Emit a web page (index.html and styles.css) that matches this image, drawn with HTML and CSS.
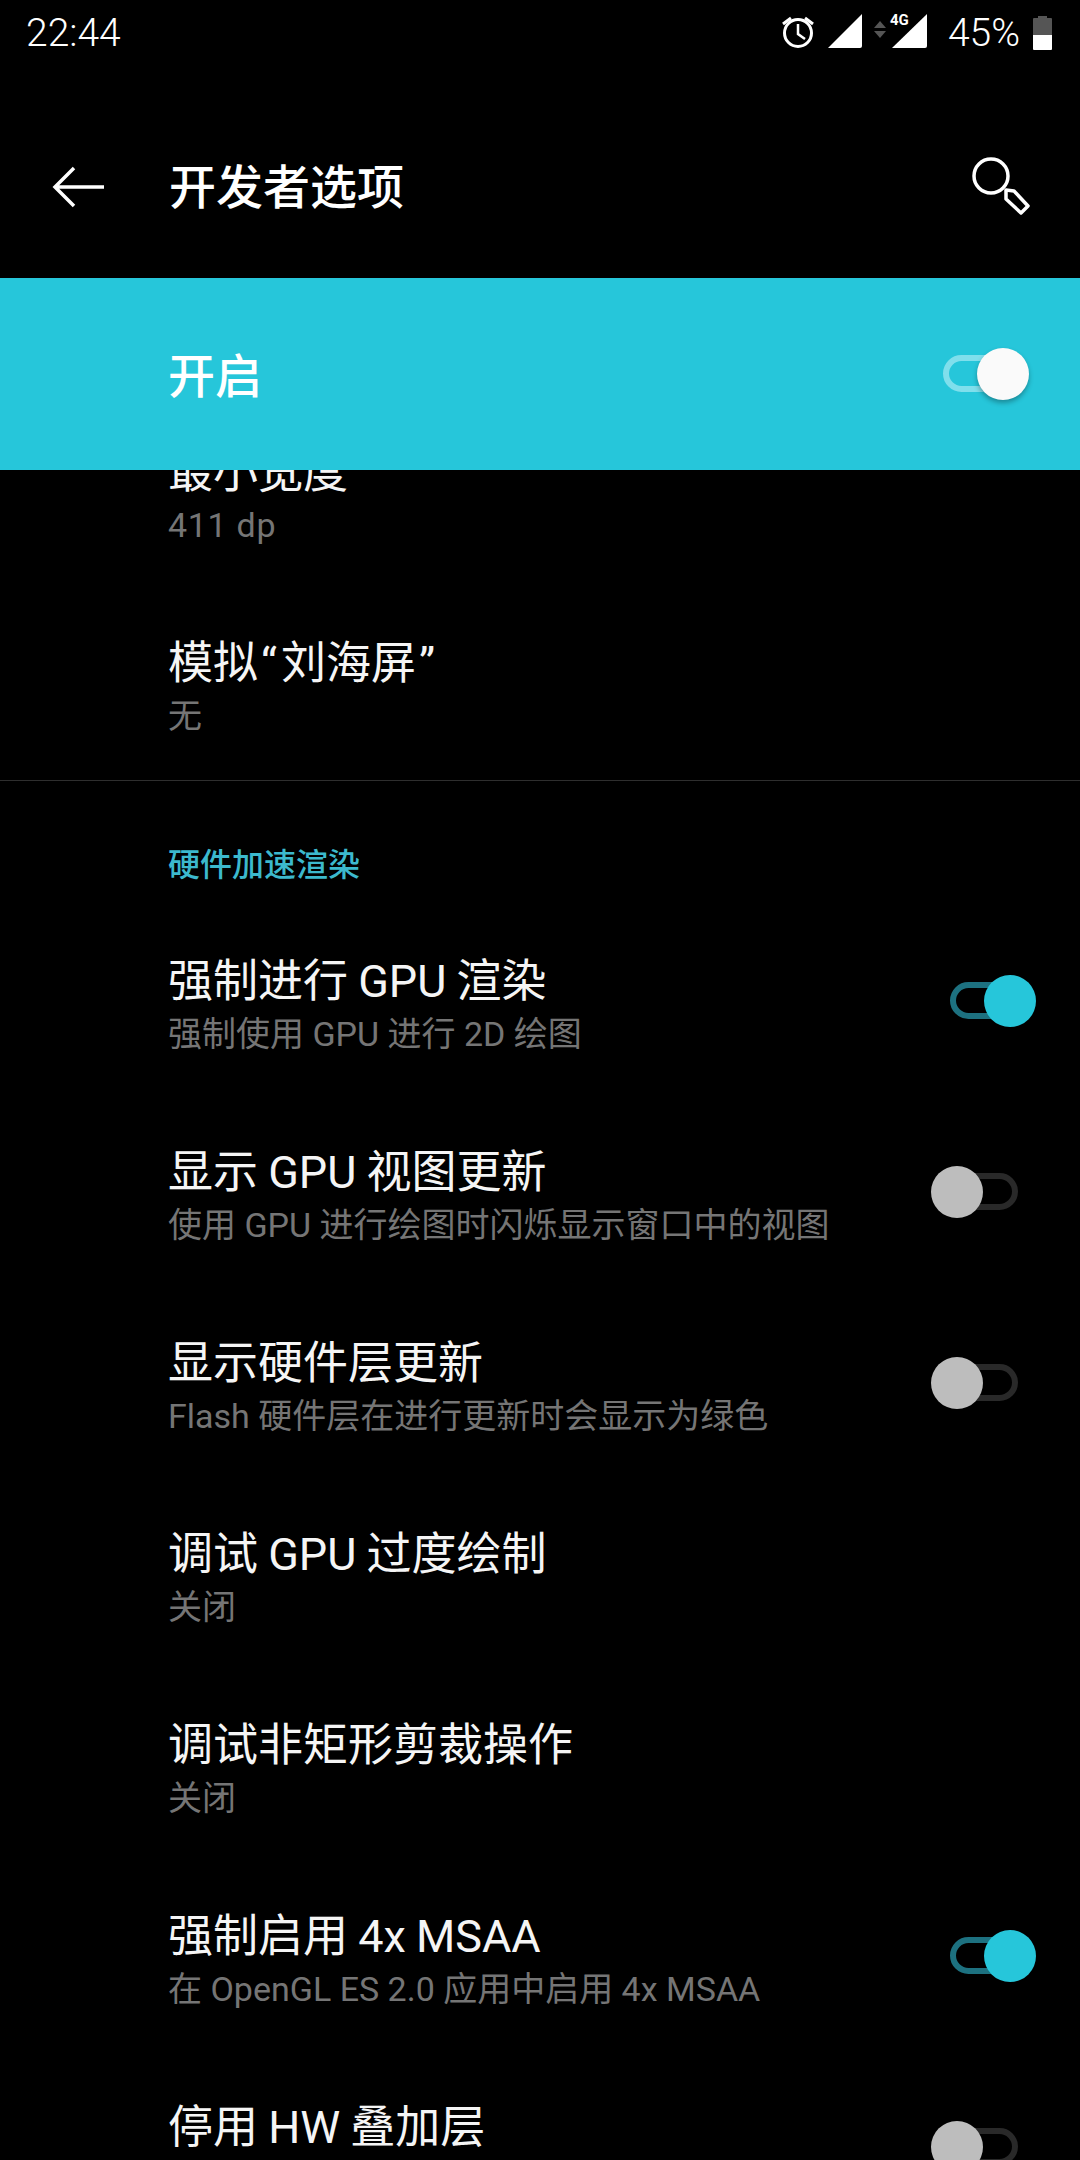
FILE: index.html
```html
<!DOCTYPE html>
<html lang="zh-CN">
<head>
    <meta charset="UTF-8">
    <meta name="viewport" content="width=device-width, initial-scale=1.0">
    <title>开发者选项</title>
    <link rel="stylesheet" href="styles.css">
</head>
<body>

    <div class="statusbar">
        <div class="time">22:44</div>
        <div class="status-right">
            <svg class="status-icons" width="150" height="66" viewBox="0 -13 150 66">
                <!-- alarm -->
                <circle cx="19" cy="20" r="13.5" fill="none" stroke="#fff" stroke-width="3"/>
                <path d="M19 11v10l7 5" fill="none" stroke="#fff" stroke-width="2.5"/>
                <path d="M4 11l8-6M34 11l-8-6" fill="none" stroke="#fff" stroke-width="3"/>
                <!-- signal -->
                <path d="M49 35L83 1v32q0 2-2 2z" fill="#fff"/>
                <!-- up/down arrows -->
                <path d="M95 15l6-7 6 7z" fill="#555"/>
                <path d="M95 18h12l-6 7z" fill="#555"/>
                <text class="net-type" x="111" y="12">4G</text>
                <!-- signal with 4G -->
                <path d="M113 35L148 1v32q0 2-2 2z" fill="#fff"/>
            </svg>
            <div class="battery-text">45%</div>
            <svg class="battery" width="19" height="34" viewBox="0 0 19 34">
                <path d="M0 3q0-1 1-1h4V0h9v2h4q1 0 1 1v16H0z" fill="#555"/>
                <path d="M0 19h19v14q0 1-1 1H1q-1 0-1-1z" fill="#fff"/>
            </svg>
        </div>
    </div>

    <div class="toolbar">
        <svg class="back" width="52" height="42" viewBox="0 0 52 42">
            <path d="M52 21H3M22 2L3 21l19 19" fill="none" stroke="#fff" stroke-width="3.5"/>
        </svg>
        <div class="page-title">开发者选项</div>
        <svg class="search" width="62" height="62" viewBox="0 0 62 62">
            <circle cx="20" cy="20" r="17" fill="none" stroke="#fff" stroke-width="3.5"/>
            <path d="M35 34l8 1 14 15-7 7-15-14z" fill="none" stroke="#fff" stroke-width="3.5" stroke-linejoin="round"/>
        </svg>
    </div>

    <div class="master">
        <div class="master-label">开启</div>
        <div class="switch switch-master"><span class="thumb"></span></div>
    </div>

    <div class="list">
        <div class="row row-first">
            <div class="text">
                <div class="name">最小宽度</div>
                <div class="sub sub-dp">411 dp</div>
            </div>
        </div>
        <div class="row">
            <div class="text">
                <div class="name">模拟<span class="quote">“</span>刘海屏<span class="quote">”</span></div>
                <div class="sub">无</div>
            </div>
        </div>

        <hr class="divider">
        <div class="category">硬件加速渲染</div>

        <div class="row">
            <div class="text">
                <div class="name">强制进行 GPU 渲染</div>
                <div class="sub">强制使用 GPU 进行 2D 绘图</div>
            </div>
            <div class="switch on"><span class="thumb"></span></div>
        </div>
        <div class="row">
            <div class="text">
                <div class="name">显示 GPU 视图更新</div>
                <div class="sub">使用 GPU 进行绘图时闪烁显示窗口中的视图</div>
            </div>
            <div class="switch"><span class="thumb"></span></div>
        </div>
        <div class="row">
            <div class="text">
                <div class="name">显示硬件层更新</div>
                <div class="sub">Flash 硬件层在进行更新时会显示为绿色</div>
            </div>
            <div class="switch"><span class="thumb"></span></div>
        </div>
        <div class="row">
            <div class="text">
                <div class="name">调试 GPU 过度绘制</div>
                <div class="sub">关闭</div>
            </div>
        </div>
        <div class="row">
            <div class="text">
                <div class="name">调试非矩形剪裁操作</div>
                <div class="sub">关闭</div>
            </div>
        </div>
        <div class="row">
            <div class="text">
                <div class="name">强制启用 4x MSAA</div>
                <div class="sub">在 OpenGL ES 2.0 应用中启用 4x MSAA</div>
            </div>
            <div class="switch on"><span class="thumb"></span></div>
        </div>
        <div class="row">
            <div class="text">
                <div class="name">停用 HW 叠加层</div>
                <div class="sub">&nbsp;</div>
            </div>
            <div class="switch"><span class="thumb"></span></div>
        </div>
    </div>

</body>
</html>
```

FILE: styles.css
```css
html, body {
    height: 100%;
}

body {
    display: flex;
    flex-direction: column;
    margin: 0;
    overflow: hidden;
    background-color: #000;
    color: #fff;
    font-family: Roboto, "Noto Sans CJK SC", sans-serif;
}

.statusbar {
    display: flex;
    flex: none;
    justify-content: space-between;
    align-items: center;
    height: 66px;
    padding: 0 28px 0 26px;
}

.time {
    font-size: 39px;
    font-weight: 300;
}

.status-right {
    display: flex;
    align-items: center;
}

.status-icons {
    display: block;
}

.net-type {
    fill: #fff;
    font-size: 15px;
    font-weight: 700;
}

.battery-text {
    margin: 0 13px 0 19px;
    font-size: 39px;
    font-weight: 300;
}

.battery {
    display: block;
}

.toolbar {
    display: flex;
    flex: none;
    align-items: center;
    height: 182px;
    padding: 30px 47px 0 52px;
}

.back {
    flex: none;
}

.page-title {
    flex: 1;
    margin-left: 65px;
    margin-bottom: 7px;
    font-size: 47px;
    font-weight: 500;
}

.search {
    flex: none;
}

.master {
    display: flex;
    flex: none;
    justify-content: space-between;
    align-items: center;
    height: 192px;
    padding: 0 44px 0 168px;
    background-color: #26c6da;
}

.master-label {
    margin-bottom: 4px;
    font-size: 47px;
    font-weight: 500;
}

.list {
    flex: 1;
    overflow: hidden;
}

.row {
    display: flex;
    justify-content: space-between;
    align-items: center;
    box-sizing: border-box;
    height: 191px;
    padding: 0 44px 0 168px;
}

.row-first {
    margin-top: -71px;
}

.name {
    height: 60px;
    font-size: 45px;
    line-height: 60px;
    word-spacing: -1px;
    color: #f5f5f5;
}

.quote {
    margin: 0 4px 0 3px;
}

.sub {
    height: 44px;
    font-size: 34px;
    line-height: 44px;
    color: #757575;
}

.sub-dp {
    letter-spacing: 0.7px;
}

.divider {
    height: 1px;
    margin: -1px 0 0;
    border: none;
    background-color: #2e2e2e;
}

.category {
    padding: 62px 0 21px 168px;
    font-size: 32px;
    font-weight: 500;
    line-height: 44px;
    color: #3cb9cd;
}

/* switches: track is 68x37, the thumb hangs over its ends */
.switch {
    position: relative;
    flex: none;
    box-sizing: border-box;
    width: 68px;
    height: 37px;
    margin-right: 18px;
    margin-top: -6px;
    border: 6px solid #292929;
    border-radius: 19px;
}

.thumb {
    position: absolute;
    top: -13px;
    left: -25px;
    width: 52px;
    height: 52px;
    border-radius: 50%;
    background-color: #bdbdbd;
}

.switch.on {
    border-color: #1d7180;
}

.switch.on .thumb {
    left: 28px;
    background-color: #26c6da;
}

.switch-master {
    margin: -2px 25px 0 0;
    border-color: #7fdfec;
}

.switch-master .thumb {
    left: 28px;
    background-color: #fafafa;
    box-shadow: 0 3px 5px rgba(0, 0, 0, 0.3);
}
```
